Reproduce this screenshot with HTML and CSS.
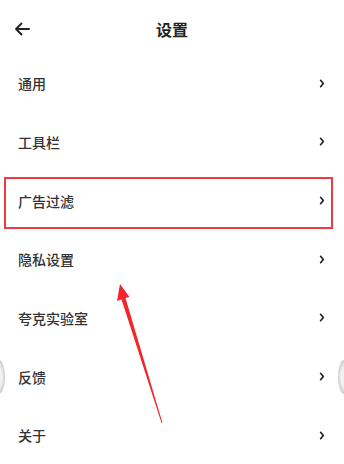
FILE: index.html
```html
<!DOCTYPE html>
<html lang="zh">
<head>
<meta charset="utf-8">
<link rel="stylesheet" href="styles.css">
</head>
<body>
<div class="page">
  <header class="header">
    <svg class="back" width="16" height="14" viewBox="0 0 16 14"><path d="M15 7H2M7.5 1.5L2 7l5.5 5.5" fill="none" stroke="#222" stroke-width="1.9" stroke-linecap="round" stroke-linejoin="round"/></svg>
    <h1 class="title">设置</h1>
  </header>
  <ul class="list">
    <li class="row"><span>通用</span><svg class="chev" width="6" height="9" viewBox="0 0 6 9"><path d="M1.6 1.3L4.3 4.5L1.6 7.7" fill="none" stroke="#222" stroke-width="1.7" stroke-linecap="round" stroke-linejoin="round"/></svg></li>
    <li class="row"><span>工具栏</span><svg class="chev" width="6" height="9" viewBox="0 0 6 9"><path d="M1.6 1.3L4.3 4.5L1.6 7.7" fill="none" stroke="#222" stroke-width="1.7" stroke-linecap="round" stroke-linejoin="round"/></svg></li>
    <li class="row"><span>广告过滤</span><svg class="chev" width="6" height="9" viewBox="0 0 6 9"><path d="M1.6 1.3L4.3 4.5L1.6 7.7" fill="none" stroke="#222" stroke-width="1.7" stroke-linecap="round" stroke-linejoin="round"/></svg></li>
    <li class="row"><span>隐私设置</span><svg class="chev" width="6" height="9" viewBox="0 0 6 9"><path d="M1.6 1.3L4.3 4.5L1.6 7.7" fill="none" stroke="#222" stroke-width="1.7" stroke-linecap="round" stroke-linejoin="round"/></svg></li>
    <li class="row"><span>夸克实验室</span><svg class="chev" width="6" height="9" viewBox="0 0 6 9"><path d="M1.6 1.3L4.3 4.5L1.6 7.7" fill="none" stroke="#222" stroke-width="1.7" stroke-linecap="round" stroke-linejoin="round"/></svg></li>
    <li class="row"><span>反馈</span><svg class="chev" width="6" height="9" viewBox="0 0 6 9"><path d="M1.6 1.3L4.3 4.5L1.6 7.7" fill="none" stroke="#222" stroke-width="1.7" stroke-linecap="round" stroke-linejoin="round"/></svg></li>
    <li class="row"><span>关于</span><svg class="chev" width="6" height="9" viewBox="0 0 6 9"><path d="M1.6 1.3L4.3 4.5L1.6 7.7" fill="none" stroke="#222" stroke-width="1.7" stroke-linecap="round" stroke-linejoin="round"/></svg></li>
  </ul>
  <div class="edge edge-left"></div>
  <div class="edge edge-right"></div>
  <div class="highlight"></div>
  <svg class="pointer" width="344" height="464" viewBox="0 0 344 464">
    <polygon points="120,284 129.5,297 125.5,298 162.5,423 161.5,423 121.5,299.5 117,301" fill="#f2262c"/>
  </svg>
</div>
</body>
</html>
```
FILE: styles.css
```css
* { box-sizing: border-box; }
html, body { margin: 0; padding: 0; background: #fff; }
body {
  font-family: "Noto Sans CJK SC", "Noto Sans", sans-serif;
  color: #333;
}
.page {
  position: relative;
  width: 344px;
  height: 464px;
  overflow: hidden;
  background: #fff;
}
.header {
  position: relative;
  height: 54px;
  padding-top: 4px;
  display: flex;
  align-items: center;
  justify-content: center;
}
.back {
  position: absolute;
  left: 14px;
  top: 22px;
}
.title {
  margin: 0;
  font-size: 16px;
  font-weight: 700;
  color: #222;
  line-height: 1;
}
.list {
  list-style: none;
  margin: 0;
  padding: 0;
}
.row {
  height: 58.67px;
  display: flex;
  align-items: center;
  justify-content: space-between;
  padding: 0 19px 0 18px;
  font-size: 14px;
  font-weight: 500;
  color: #333;
}
.chev { display: block; }
.edge {
  position: absolute;
  top: 360px;
  width: 12px;
  height: 34px;
  border-radius: 50%;
  background: radial-gradient(ellipse at center, #f2f2f2 35%, #bdbdbd 85%, #e0e0e0 100%);
}
.edge-left { left: -7px; }
.edge-right { right: -6px; }
.highlight {
  position: absolute;
  left: 4px;
  top: 177px;
  width: 329px;
  height: 52px;
  border: 2px solid #ee3a40;
}
.pointer {
  position: absolute;
  left: 0;
  top: 0;
}
```
